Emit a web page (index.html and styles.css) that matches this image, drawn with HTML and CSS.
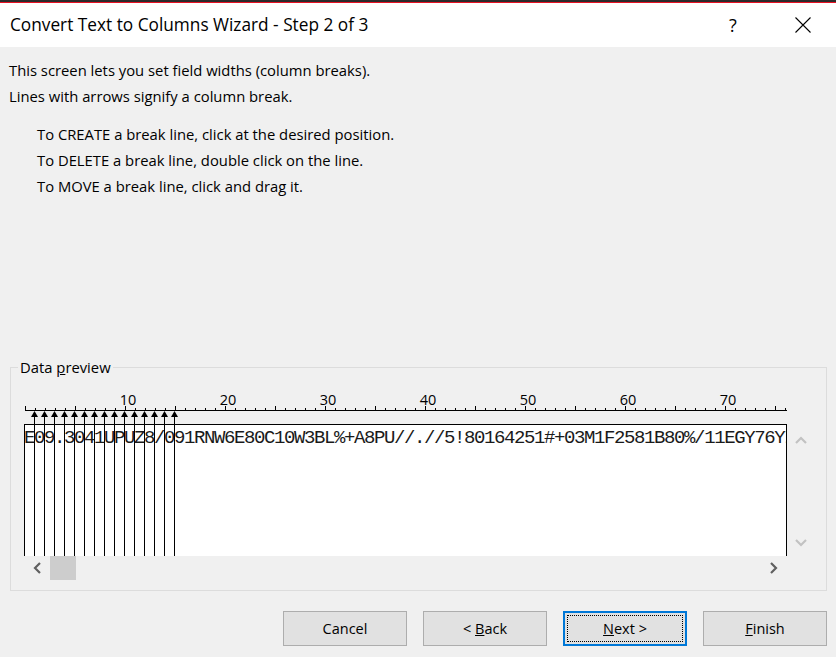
FILE: index.html
```html
<!DOCTYPE html>
<html>
<head>
<meta charset="utf-8">
<link rel="stylesheet" href="styles.css">
</head>
<body>
<div class="window">
  <div class="topband"></div>
  <div class="titlebar">
    <div class="title">Convert Text to Columns Wizard - Step 2 of 3</div>
    <div class="cap-help">?</div>
    <div class="cap-close">
      <svg width="16" height="16" viewBox="0 0 16 16"><path d="M0.5 0.5 L15.5 15.5 M15.5 0.5 L0.5 15.5" stroke="#000" stroke-width="1.1" fill="none"/></svg>
    </div>
  </div>
  <div class="content">
    <p class="line">This screen lets you set field widths (column breaks).</p>
    <p class="line">Lines with arrows signify a column break.</p>
    <div class="steps">
      <p class="line">To CREATE a break line, click at the desired position.</p>
      <p class="line">To DELETE a break line, double click on the line.</p>
      <p class="line">To MOVE a break line, click and drag it.</p>
    </div>
  </div>
  <fieldset class="group">
    <legend class="legend">Data <u>p</u>review</legend>
    <div class="preview">
      <svg class="ruler" width="763" height="34" viewBox="0 0 763 34">
        <defs>
          <pattern id="tick1" x="0" y="0" width="10" height="34" patternUnits="userSpaceOnUse">
            <rect x="1" y="18" width="1" height="2" fill="#000"/>
          </pattern>
          <pattern id="tick5" x="0" y="0" width="50" height="34" patternUnits="userSpaceOnUse">
            <rect x="1" y="16" width="1" height="4" fill="#000"/>
          </pattern>
        </defs>
        <rect x="0" y="0" width="763" height="20" fill="url(#tick1)"/>
        <rect x="0" y="0" width="763" height="20" fill="url(#tick5)"/>
        <rect x="1" y="20" width="762" height="1" fill="#000"/>
        <g class="rlabels">
          <text x="104" y="15">10</text>
          <text x="204" y="15">20</text>
          <text x="304" y="15">30</text>
          <text x="404" y="15">40</text>
          <text x="504" y="15">50</text>
          <text x="604" y="15">60</text>
          <text x="704" y="15">70</text>
        </g>
      </svg>
      <div class="row">
        <div class="databox">
          <div class="dataline">E09.3041UPUZ8/091RNW6E80C10W3BL%+A8PU//.//5!80164251#+03M1F2581B80%/11EGY76YI</div>
        </div>
        <div class="vscroll">
          <svg width="12" height="8" viewBox="0 0 12 8"><path d="M1 7 L6 2 L11 7" stroke="#c2c2c2" stroke-width="2.2" fill="none"/></svg>
          <svg width="12" height="8" viewBox="0 0 12 8"><path d="M1 1 L6 6 L11 1" stroke="#c2c2c2" stroke-width="2.2" fill="none"/></svg>
        </div>
      </div>
      <div class="hscroll">
        <div class="harrow">
          <svg width="8" height="12" viewBox="0 0 8 12"><path d="M7 1 L2 6 L7 11" stroke="#606060" stroke-width="2.2" fill="none"/></svg>
        </div>
        <div class="thumb"></div>
        <div class="htrack"></div>
        <div class="harrow">
          <svg width="8" height="12" viewBox="0 0 8 12"><path d="M1 1 L6 6 L1 11" stroke="#606060" stroke-width="2.2" fill="none"/></svg>
        </div>
      </div>
      <svg class="breaks" width="160" height="145" viewBox="0 0 160 145">
        <g fill="#000">
          <path d="M10.5 0 L14 6 L7 6 Z"/><rect x="10" y="5" width="1" height="140"/>
          <path d="M20.5 0 L24 6 L17 6 Z"/><rect x="20" y="5" width="1" height="140"/>
          <path d="M30.5 0 L34 6 L27 6 Z"/><rect x="30" y="5" width="1" height="140"/>
          <path d="M40.5 0 L44 6 L37 6 Z"/><rect x="40" y="5" width="1" height="140"/>
          <path d="M50.5 0 L54 6 L47 6 Z"/><rect x="50" y="5" width="1" height="140"/>
          <path d="M60.5 0 L64 6 L57 6 Z"/><rect x="60" y="5" width="1" height="140"/>
          <path d="M70.5 0 L74 6 L67 6 Z"/><rect x="70" y="5" width="1" height="140"/>
          <path d="M80.5 0 L84 6 L77 6 Z"/><rect x="80" y="5" width="1" height="140"/>
          <path d="M90.5 0 L94 6 L87 6 Z"/><rect x="90" y="5" width="1" height="140"/>
          <path d="M100.5 0 L104 6 L97 6 Z"/><rect x="100" y="5" width="1" height="140"/>
          <path d="M110.5 0 L114 6 L107 6 Z"/><rect x="110" y="5" width="1" height="140"/>
          <path d="M120.5 0 L124 6 L117 6 Z"/><rect x="120" y="5" width="1" height="140"/>
          <path d="M130.5 0 L134 6 L127 6 Z"/><rect x="130" y="5" width="1" height="140"/>
          <path d="M140.5 0 L144 6 L137 6 Z"/><rect x="140" y="5" width="1" height="140"/>
          <path d="M150.5 0 L154 6 L147 6 Z"/><rect x="150" y="5" width="1" height="140"/>
        </g>
      </svg>
    </div>
  </fieldset>
  <div class="buttons">
    <div class="btn"><span>Cancel</span></div>
    <div class="btn"><span>&lt; <u>B</u>ack</span></div>
    <div class="btn btn-default"><span><u>N</u>ext &gt;</span></div>
    <div class="btn"><span><u>F</u>inish</span></div>
  </div>
</div>
</body>
</html>
```
FILE: styles.css
```css
html, body {
  margin: 0;
  padding: 0;
}
body {
  width: 836px;
  height: 657px;
  overflow: hidden;
  background: #f0f0f0;
  font-family: "Open Sans", "Noto Sans", sans-serif;
  color: #000;
}
.window {
  width: 836px;
  height: 657px;
  background: #f0f0f0;
}
.topband {
  height: 2px;
  background: #2b2b2b;
  border-bottom: 1px solid #e81123;
}
.titlebar {
  height: 44px;
  background: #fff;
  display: flex;
  align-items: center;
}
.title {
  flex: 1;
  padding-left: 10px;
  font-size: 17.25px;
  line-height: 24px;
}
.cap-help {
  width: 70px;
  margin-right: 2px;
  text-align: center;
  font-size: 18px;
  line-height: 24px;
}
.cap-close {
  width: 66px;
  height: 44px;
  display: flex;
  align-items: center;
  justify-content: center;
}
.content {
  padding: 10px 0 0 9px;
}
.line {
  margin: 0;
  font-size: 14.8px;
  line-height: 26px;
  white-space: nowrap;
}
.steps {
  margin-top: 12px;
  padding-left: 28px;
}
.group {
  box-sizing: border-box;
  width: 817px;
  min-width: 0;
  margin: 158px 0 0 10px;
  padding: 13px 0 10px 13px;
  border: 1px solid #dcdcdc;
}
.legend {
  margin-left: -6px;
  padding: 0 2px;
  font-size: 14.8px;
  line-height: 20px;
}
.preview {
  position: relative;
}
.ruler {
  display: block;
}
.rlabels text {
  font-family: "Open Sans", "Noto Sans", sans-serif;
  font-size: 14.5px;
  text-anchor: middle;
  fill: #000;
}
.row {
  display: flex;
}
.databox {
  box-sizing: border-box;
  width: 763px;
  height: 132px;
  background: #fff;
  border: 1px solid #000;
  border-bottom: none;
  overflow: hidden;
  padding-top: 3px;
}
.dataline {
  margin-left: -1px;
  font-family: "Liberation Mono", monospace;
  font-size: 19px;
  letter-spacing: -1.4px;
  line-height: 20px;
  white-space: nowrap;
  color: #1a1a1a;
}
.vscroll {
  width: 26px;
  height: 132px;
  box-sizing: border-box;
  padding: 12px 0 9px 1px;
  display: flex;
  flex-direction: column;
  justify-content: space-between;
  align-items: center;
}
.vscroll svg, .harrow svg {
  display: block;
}
.hscroll {
  width: 763px;
  height: 24px;
  display: flex;
}
.harrow {
  width: 26px;
  display: flex;
  align-items: center;
  justify-content: center;
}
.thumb {
  width: 26px;
  background: #cdcdcd;
}
.htrack {
  flex: 1;
}
.breaks {
  position: absolute;
  left: 0;
  top: 21px;
}
.buttons {
  display: flex;
  justify-content: flex-end;
  gap: 16px;
  margin-top: 20px;
  padding-right: 9px;
}
.btn {
  box-sizing: border-box;
  width: 124px;
  height: 35px;
  border: 1px solid #adadad;
  background: #e1e1e1;
  display: flex;
  align-items: center;
  justify-content: center;
  font-size: 14.5px;
}
.btn span {
  white-space: pre;
}
.btn-default {
  border: 2px solid #0078d7;
  outline: 1px dotted #000;
  outline-offset: -5px;
}
```
